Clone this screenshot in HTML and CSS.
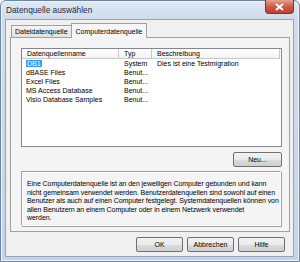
FILE: index.html
```html
<!DOCTYPE html>
<html>
<head>
<meta charset="utf-8">
<link rel="stylesheet" href="styles.css">
</head>
<body>
<div class="window">
  <div class="titlebar">
    <span class="title">Datenquelle auswählen</span>
    <div class="close"><svg width="9" height="8" viewBox="0 0 9 8"><path d="M1 1 L8 7 M8 1 L1 7" stroke="#fff" stroke-width="2"/></svg></div>
  </div>
  <div class="client">
    <div class="tabs">
      <div class="tab">Dateidatenquelle</div>
      <div class="tab active">Computerdatenquelle</div>
    </div>
    <div class="panel">
      <div class="list">
        <div class="head">
          <div class="col c1">Datenquellenname</div>
          <div class="col c2">Typ</div>
          <div class="col c3">Beschreibung</div>
        </div>
        <div class="row"><div class="c1"><span class="sel">DB1</span></div><div class="c2">System</div><div class="c3">Dies ist eine Testmigration</div></div>
        <div class="row"><div class="c1">dBASE Files</div><div class="c2">Benut...</div><div class="c3"></div></div>
        <div class="row"><div class="c1">Excel Files</div><div class="c2">Benut...</div><div class="c3"></div></div>
        <div class="row"><div class="c1">MS Access Database</div><div class="c2">Benut...</div><div class="c3"></div></div>
        <div class="row"><div class="c1">Visio Database Samples</div><div class="c2">Benut...</div><div class="c3"></div></div>
      </div>
      <div class="neurow"><div class="btn neu">Neu...</div></div>
      <div class="group">Eine Computerdatenquelle ist an den jeweiligen Computer gebunden und kann nicht gemeinsam verwendet werden. Benutzerdatenquellen sind sowohl auf einen Benutzer als auch auf einen Computer festgelegt. Systemdatenquellen können von allen Benutzern an einem Computer oder in einem Netzwerk verwendet<br>werden.</div>
    </div>
    <div class="buttons">
      <div class="btn">OK</div>
      <div class="btn">Abbrechen</div>
      <div class="btn">Hilfe</div>
    </div>
  </div>
</div>
</body>
</html>
```
FILE: styles.css
```css
html, body { margin: 0; padding: 0; }
body { width: 300px; height: 262px; overflow: hidden; background: #fff; font-family: "Liberation Sans", Arial, sans-serif; font-size: 7px; color: #000; }
.window {
  width: 300px; height: 262px; box-sizing: border-box;
  border: 1px solid #6d85a3; border-radius: 6px 6px 0 0;
  background: linear-gradient(to bottom, #dfe8f3 0px, #cfdcec 18px, #c4d5ea 100%);
  display: flex; flex-direction: column;
  box-shadow: inset 0 0 0 1px #eef3fa;
}
.titlebar { height: 18px; position: relative; display: flex; align-items: center; padding-left: 5px; }
.title { font-size: 8.3px; color: #1e2b3c; }
.close {
  position: absolute; right: 5px; top: -1px; width: 29px; height: 14px;
  background: linear-gradient(to bottom, #e3a290 0%, #cf5a45 50%, #c0402c 100%);
  border: 1px solid #7a3528; border-top: none; border-radius: 0 0 4px 4px; box-sizing: border-box;
  display: flex; align-items: center; justify-content: center;
}
.client {
  flex: 1; margin: 0 5px 4px 4px; background: #f0f0f0;
  border: 1px solid #8ea6c2; display: flex; flex-direction: column;
  padding: 3px 3px 0 4px;
}
.tabs { display: flex; padding-left: 1px; height: 14px; align-items: flex-end; }
.tab {
  height: 12px; padding: 0 3px; border: 1px solid #a0a0a0; border-bottom: none;
  background: linear-gradient(#f4f4f4, #e2e2e2); display: flex; align-items: center; box-sizing: border-box;
}
.tab.active { height: 15px; background: #f6f6f6; margin-left: -1px; padding: 0 4px; position: relative; top: 1px; z-index: 1; }
.panel {
  height: 195px; box-sizing: border-box; background: #f4f4f4; border: 1px solid #a0a0a0;
  padding: 10px 7px 0 10px; display: flex; flex-direction: column;
}
.list { height: 99px; border: 1px solid #828790; background: #fff; box-sizing: border-box; }
.head { display: flex; height: 10px; }
.head .col { border-right: 1px solid #c8c8c8; border-bottom: 1px solid #c8c8c8; padding-left: 5px; line-height: 9px; box-sizing: border-box; background: linear-gradient(#fff, #f3f3f3); }
.c1 { width: 97px; }
.c2 { width: 33px; }
.c3 { width: 128px; }
.row { display: flex; height: 9px; line-height: 9px; }
.row > div { padding-left: 5px; box-sizing: border-box; white-space: nowrap; }
.row .c1 { padding-left: 4px; }
.sel { background: #3399ff; color: #fff; padding: 0 1px; }
.neurow { display: flex; justify-content: flex-end; padding-top: 5px; }
.btn {
  height: 15px; box-sizing: border-box; border: 1px solid #707070; border-radius: 2px;
  background: linear-gradient(#f2f2f2 0%, #ebebeb 50%, #dddddd 51%, #cfcfcf 100%);
  display: flex; align-items: center; justify-content: center; width: 49px;
}
.group {
  margin-top: 4px; height: 55px; box-sizing: border-box;
  border: 1px solid #a0a0a0; border-right-color: #fff; border-bottom-color: #fff;
  box-shadow: 1px 1px 0 #a0a0a0, inset 1px 1px 0 #fff;
  padding: 8px 1px 0 5px; line-height: 8.6px; margin-right: 1px; letter-spacing: -0.07px;
}
.buttons { display: flex; justify-content: flex-end; gap: 4px; padding: 5px 5px 0 0; }
.buttons .btn { width: 47px; }
```
